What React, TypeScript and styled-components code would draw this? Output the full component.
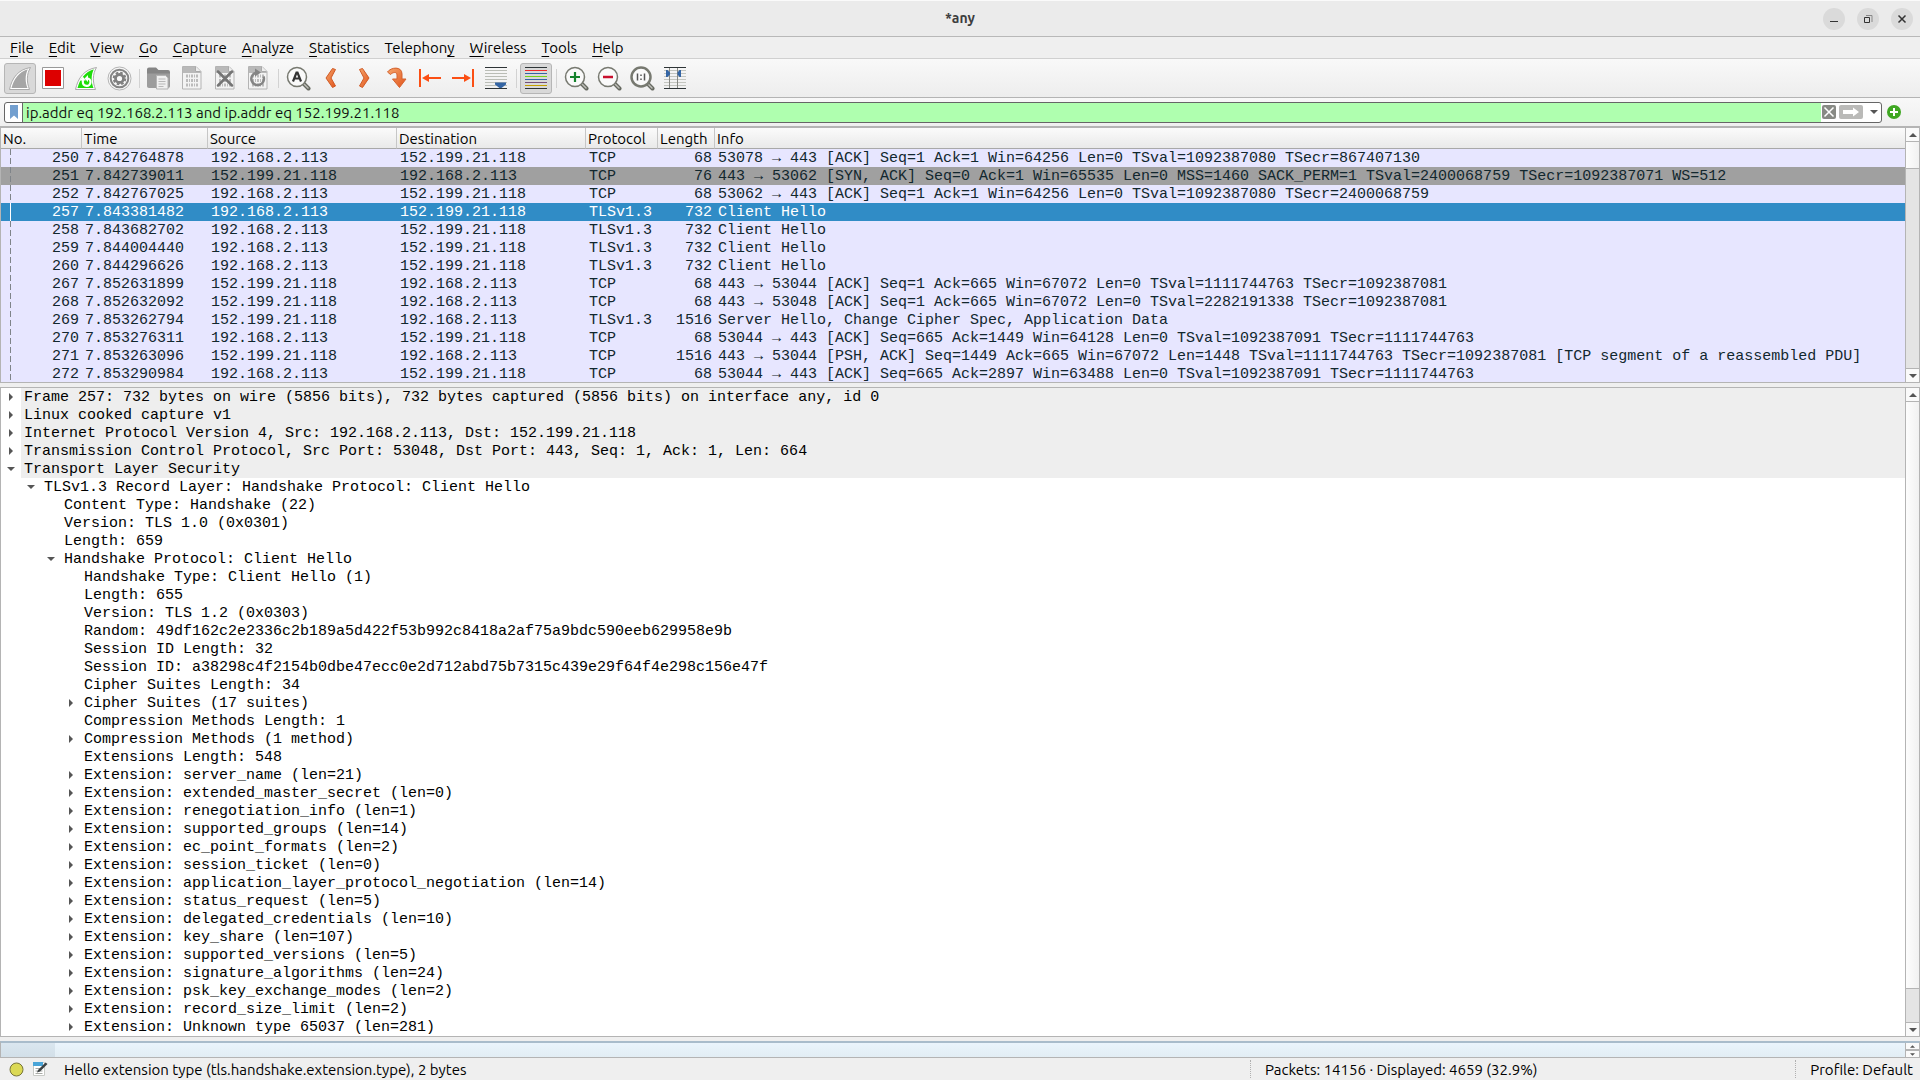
import React from 'react';
import styled, { createGlobalStyle, css } from 'styled-components';

const ui = '"Ubuntu", "Open Sans", sans-serif';
const mono = '"Liberation Mono", monospace';

const GlobalStyle = createGlobalStyle`
  * { box-sizing: border-box; }
  html, body { margin: 0; height: 100%; overflow: hidden; }
  #root { height: 100%; }
  button { font: inherit; color: inherit; border: 0; padding: 0; background: none; }
`;

const Window = styled.div`
  height: 100vh;
  display: flex;
  flex-direction: column;
  background: #efefef;
  color: #000;
  font: 15px/20px ${ui};
  white-space: nowrap;
`;

const TitleBar = styled.header`
  flex: none;
  height: 37px;
  display: grid;
  grid-template-columns: 1fr auto 1fr;
  align-items: center;
  background: #ebebeb;
  border-top: 1px solid #fafafa;
  border-bottom: 1px solid #b8b8b8;
`;
const Title = styled.h1`
  grid-column: 2;
  margin: 0;
  padding-bottom: 2px;
  font-size: 14px;
  font-weight: 700;
  line-height: 20px;
  color: #3d3d3d;
`;
const WindowButtons = styled.div`
  display: flex;
  justify-content: flex-end;
  gap: 12px;
  padding-right: 7px;
`;
const WindowButton = styled.button`
  width: 22px;
  height: 22px;
  border-radius: 50%;
  background: #dadada;
  display: grid;
  place-items: center;
`;

const MenuBar = styled.nav`
  flex: none;
  height: 22px;
  display: flex;
  align-items: center;
  padding-left: 10px;
  gap: 15px;
  border-bottom: 1px solid #d0d0d0;
`;
const MenuItem = styled.button`
  line-height: 20px;
  u { text-decoration-thickness: 1px; text-underline-offset: 3px; }
`;

const ToolBar = styled.div`
  flex: none;
  height: 39px;
  display: flex;
  align-items: center;
  padding-left: 4px;
  gap: 1px;
  background: linear-gradient(#f9f9f9, #ededed);
  border-bottom: 1px solid #b4b4b4;
`;
const ToolButton = styled.button<{ $down?: boolean }>`
  width: 32px;
  height: 31px;
  display: grid;
  place-items: center;
  border: 1px solid transparent;
  border-radius: 3px;
  ${(p) => p.$down && css`
    background: #d9d9d9;
    border-color: #b6b6b6;
  `}
  svg { display: block; }
`;
const ToolSeparator = styled.span`
  width: 1px;
  height: 19px;
  margin: 0 2px 0 3px;
  background: #d2d2d2;
`;

const FilterBar = styled.form`
  flex: none;
  height: 28px;
  display: flex;
  align-items: center;
  gap: 5px;
  padding: 0 19px 0 4px;
  background: linear-gradient(#f8f8f8, #efefef);
`;
const FilterField = styled.div`
  flex: 1;
  height: 21px;
  display: flex;
  align-items: center;
  border: 1px solid #666;
  border-radius: 3px;
  background: #fff;
  overflow: hidden;
`;
const Bookmark = styled.button`
  width: 18px;
  height: 19px;
  display: grid;
  place-items: center;
  border-right: 1px solid #666;
`;
const FilterInput = styled.input`
  flex: 1;
  height: 19px;
  border: 0;
  outline: 0;
  padding: 0 3px;
  background: #afffaf;
  font: 15px/19px ${ui};
  color: #111;
`;
const FieldButton = styled.button<{ $width: number; $fill?: string }>`
  width: ${(p) => p.$width}px;
  height: 14px;
  margin-left: ${(p) => (p.$width > 14 ? 3 : 1)}px;
  border-radius: 2px;
  background: ${(p) => p.$fill ?? 'transparent'};
  display: grid;
  place-items: center;
`;
const AddButton = styled.button`
  width: 14px;
  height: 14px;
  svg { display: block; }
`;

const Pane = styled.section<{ $height?: string }>`
  flex: ${(p) => (p.$height ? `0 0 ${p.$height}` : '1 1 0')};
  min-height: 0;
  display: flex;
  border: 1px solid #b4b4b4;
  background: #fff;
`;
const PacketPane = styled(Pane)`
  border-top-width: 2px;
`;
const Splitter = styled.div`
  flex: none;
  height: 4px;
`;
const Scroller = styled.div`
  flex: 1;
  min-width: 0;
  overflow: hidden;
`;

const Packets = styled.table`
  width: 100%;
  table-layout: fixed;
  border-collapse: separate;
  border-spacing: 0;
  font: 15px/17px ${mono};
`;
const HeadCell = styled.th`
  height: 21px;
  padding: 1px 2px 0;
  text-align: left;
  font: 400 15px/19px ${ui};
  background: linear-gradient(#fbfbfb, #e9e9e9);
  border-right: 1px solid #c6c6c6;
  border-bottom: 1px solid #a8a8a8;
  &:last-child { border-right: 0; }
`;
const Row = styled.tr<{ $kind: string }>`
  background: ${(p) => (p.$kind === 'syn' ? '#a0a0a0' : p.$kind === 'selected' ? '#308cc6' : '#e7e6ff')};
  color: ${(p) => (p.$kind === 'selected' ? '#fff' : '#12272e')};
`;
const Cell = styled.td<{ $right?: boolean }>`
  height: 18px;
  padding: 1px 3px 0;
  text-align: ${(p) => (p.$right ? 'right' : 'left')};
  overflow: hidden;
`;
const NumberCell = styled.td<{ $solid: boolean }>`
  height: 18px;
  padding: 0 3px 0 9px;
  > span {
    display: block;
    height: 18px;
    padding-top: 1px;
    text-align: right;
    background: ${(p) => (p.$solid
      ? 'linear-gradient(#fff, #fff) 0 0 / 1px 18px no-repeat'
      : 'repeating-linear-gradient(#7f8489 0 6px, transparent 6px 9px) 0 0 / 1px 18px no-repeat')};
  }
`;

const Track = styled.div`
  flex: none;
  width: 14px;
  display: flex;
  flex-direction: column;
  border-left: 1px solid #b4b4b4;
  background: #e4e4e4;
`;
const ArrowButton = styled.button<{ $end?: boolean; $small?: boolean }>`
  flex: none;
  height: ${(p) => (p.$small ? 7 : 14)}px;
  display: grid;
  place-items: center;
  background: #fafafa;
  border: 0 solid #b4b4b4;
  border-top-width: ${(p) => (p.$end ? 1 : 0)}px;
  border-bottom-width: ${(p) => (p.$end ? 0 : 1)}px;
`;
const Thumb = styled.div<{ $size: string }>`
  flex: 0 1 ${(p) => p.$size};
  background: linear-gradient(90deg, #fdfdfd, #f1f1f1);
  border-bottom: 1px solid #b4b4b4;
`;
const Gap = styled.div`
  flex: 1;
`;

const Tree = styled.ul`
  list-style: none;
  margin: 0;
  padding: 0;
  font: 15px/17px ${mono};
`;
const TreeRow = styled.li<{ $level: number }>`
  height: 18px;
  display: flex;
  padding-left: ${(p) => p.$level * 20}px;
`;
const Twisty = styled.span`
  flex: none;
  width: 20px;
  height: 18px;
  display: grid;
  place-items: center;
`;
const TreeText = styled.span<{ $shade: boolean }>`
  flex: 1;
  padding: 1px 0 0 3px;
  background: ${(p) => (p.$shade ? '#eeeeee' : 'transparent')};
`;

const BytesPane = styled(Pane)`
  border-top: 2px solid #a9bccb;
`;
const Offsets = styled.div`
  width: 54px;
  background: linear-gradient(#dae6ef, #d2dfe8);
`;
const Bytes = styled.div`
  flex: 1;
  background: linear-gradient(#eaf4fc, #e2edf4);
`;

const StatusBar = styled.footer`
  flex: none;
  height: 22px;
  display: grid;
  grid-template-columns: 1250px 1fr auto;
  align-items: center;
`;
const StatusCell = styled.div<{ $divided?: boolean }>`
  display: flex;
  align-items: center;
  height: 18px;
  padding: 2px 7px 0 ${(p) => (p.$divided ? 14 : 9)}px;
  border-left: ${(p) => (p.$divided ? '1px dotted #b0b0b0' : '0')};
`;
const StatusButton = styled.button<{ $space: number }>`
  margin: 0 ${(p) => p.$space}px 2px 0;
  svg { display: block; }
`;

const Arrow = ({ dir, small }: { dir: 'up' | 'down' | 'right'; small?: boolean }) => {
  const d = { up: 'M0 4 4 0 8 4z', down: 'M0 0h8l-4 4z', right: 'M0 0l4 4-4 4z' }[dir];
  const side = dir === 'right';
  const k = small ? 2 : 1;
  return (
    <svg width={(side ? 4 : 8 / k + (small ? 1 : 0))} height={(side ? 8 : 4 / k + (small ? 1 : 0))} viewBox={side ? '0 0 4 8' : '0 0 8 4'}>
      <path d={d} fill="#555" />
    </svg>
  );
};

const Fin = ({ fill, loop }: { fill: string; loop?: boolean }) => (
  <svg width="24" height="25" viewBox="0 0 24 25">
    <path d="M1.500 23.500C4 12 10 3.500 22.500 1.500 18.500 8 18.500 16 21.500 23.500z" fill="#fff" stroke="#aaa" />
    <path d="M3.500 22C6 13 11 6 19.800 3.300 17 9 17 16 19.500 22z" fill={fill} />
    {loop && (
      <>
        <path d="M8.800 13.500v2c0 5.800 7.700 5.800 7.700.5 0-2.200-1.200-3.500-3.500-3.500" fill="none" stroke="#fff" strokeWidth="2.200" />
        <path d="M5.800 14.500 8.800 10.500l3 4zM14 9l-3.500 3.500L14 16z" fill="#fff" />
      </>
    )}
  </svg>
);
const Gear = () => (
  <svg width="25" height="25" viewBox="0 0 25 25" fill="none">
    <circle cx="12.500" cy="12.500" r="11.500" fill="#f8f8f8" stroke="#b4b4b4" />
    <circle cx="12.500" cy="12.500" r="8.800" stroke="#858585" strokeWidth="2" />
    <circle cx="12.500" cy="12.500" r="5.800" stroke="#808080" strokeWidth="2" strokeDasharray="2.600 1.955" />
    <circle cx="12.500" cy="12.500" r="4" stroke="#808080" strokeWidth="2.800" />
  </svg>
);
const Folder = () => (
  <svg width="26" height="24" viewBox="0 0 26 24">
    <path d="M1 3.500Q1 1.500 3 1.500h7l2.500 2.500H22q2 0 2 2V19q0 2-2 2H3q-2 0-2-2z" fill="#858585" />
    <path d="M1 7.500h23V20q0 2-2 2H3q-2 0-2-2z" fill="#9c9c9c" />
    <path d="M10.500 9.500h9l2.500 2.500v11h-11.500z" fill="#f0f0f0" stroke="#b4b4b4" />
    <path d="M12.500 13h7M12.500 15.500h7M12.500 18h7M12.500 20.500h5" stroke="#b8b8b8" />
  </svg>
);
const Page = ({ mark }: { mark?: 'close' | 'reload' }) => (
  <svg width="22" height="26" viewBox="0 0 22 26">
    <path d="M1.500 1.500h13.500l5 5v17.500h-18.500z" fill="#f3f3f3" stroke="#b4b4b4" />
    <path d="M2 2h12.500v4.500H20V8H2z" fill="#b9b9b9" />
    <path d="M14.500 1.500v5h5" fill="#eee" stroke="#aaa" />
    <path d="M5 11h12M5 15.500h12M5 20h12" stroke="#bbb" strokeWidth="3" strokeDasharray="2 1 1 1" />
    {mark === 'close' && <path d="M4 6.500 18 20.500M18 6.500 4 20.500" stroke="#747474" strokeWidth="2.500" strokeLinecap="round" />}
    {mark === 'reload' && (
      <>
        <path d="M16.500 11.500A6.300 6.300 0 1 1 9 7.700" fill="none" stroke="#858585" strokeWidth="2.500" />
        <path d="M8 3.500l6 4-6 4z" fill="#858585" />
      </>
    )}
  </svg>
);
const Lens = ({ sign }: { sign: 'A' | 'plus' | 'minus' | 'one' }) => (
  <svg width="25" height="25" viewBox="0 0 25 25">
    <path d="M17.500 17.500 22.500 22.500" stroke="#666960" strokeWidth="4" strokeLinecap="round" />
    <path d="M18 18 22 22" stroke="#bfc0ba" strokeWidth="1.500" strokeLinecap="round" />
    <circle cx="11" cy="11" r="9.500" fill="#fafafa" stroke="#777970" strokeWidth={sign === 'one' ? 2.5 : 1.5} />
    {sign === 'A' && <path d="M7 15.500 10.500 6.500h1L15 15.500M8.500 12.500h5" fill="none" stroke="#333" strokeWidth="2.200" />}
    {sign === 'plus' && <path d="M6 11h10M11 6v10" stroke="#15832c" strokeWidth="2.200" />}
    {sign === 'minus' && <path d="M6 11h10" stroke="#c8102e" strokeWidth="2.500" />}
    {sign === 'one' && <path d="M7.500 7.500v7M14.500 7.500v7M11 8.500v1.500M11 12.500v1.500" stroke="#555" strokeWidth="1.500" />}
  </svg>
);
const OrangeDefs = () => (
  <defs>
    <linearGradient id="orange" x1="0" y1="0" x2="1" y2="1">
      <stop offset="0" stopColor="#f5a56b" />
      <stop offset="1" stopColor="#e2541b" />
    </linearGradient>
  </defs>
);
const Chevron = ({ flip }: { flip?: boolean }) => (
  <svg width="14" height="24" viewBox="0 0 14 24">
    <OrangeDefs />
    <path
      d={flip ? 'M2.500 3.500 5.500 2.500 12 12 5.500 21.500 2.500 20 7 12z' : 'M11.500 3.500 8.500 2.500 2 12 8.500 21.500 11.500 20 7 12z'}
      fill="url(#orange)" stroke="#cf5a25" strokeLinejoin="round"
    />
  </svg>
);
const JumpTo = () => (
  <svg width="22" height="24" viewBox="0 0 22 24">
    <path d="M1.500 6C5 1 16 0 16 8v5h4l-6.500 8.500L6.500 13H11V9C11 5.500 7 6 4.500 8.500z" fill="url(#orange)" stroke="#d4622e" strokeLinejoin="round" />
  </svg>
);
const EndArrow = ({ flip }: { flip?: boolean }) => (
  <svg width="24" height="20" viewBox="0 0 24 20">
    <g transform={flip ? 'matrix(-1 0 0 1 24 0)' : undefined} fill="#fb4f14">
      <path d="M1 1h2v18H1z" />
      <path d="M4 10l7-4v3h12v2H11v3z" />
    </g>
  </svg>
);
const Lines = ({ colors }: { colors: string[] }) => (
  <svg width="22" height="24" viewBox="0 0 22 24">
    {colors.map((c, i) => <path key={i} d={`M0 ${1.5 + i * 3}h22`} stroke={c} />)}
  </svg>
);
const AutoScroll = () => (
  <svg width="22" height="24" viewBox="0 0 22 24">
    <path d="M0 1.500h22M0 22.500h22" stroke="#2e3436" />
    <path d="M0 4.500h22M0 7.500h22M0 10.500h22M0 13.500h22M0 16.500h22M0 19.500h22" stroke="#babdb6" />
    <path d="M10 16.500h11v2l-4.500 3.500h-2L10 18.500z" fill="#3465a4" />
  </svg>
);
const Columns = () => (
  <svg width="22" height="24" viewBox="0 0 22 24">
    <path d="M0 1.500h22M0 22.500h22" stroke="#2e3436" />
    <path d="M0 4.500h22M0 7.500h22M0 10.500h22M0 13.500h22M0 16.500h22M0 19.500h22" stroke="#c4c6c0" />
    <path d="M5.500 2v20M13.500 2v20" stroke="#888a85" />
    <path d="M2 4h1.500L6 6.500v2L3.500 11H2zM17 4h-1.500L13.500 6.500v2L15.500 11H17z" fill="#3465a4" />
  </svg>
);

const tools: { label: string; icon?: React.ReactNode; down?: boolean }[] = [
  { label: 'Start capturing', icon: <Fin fill="#a5a5a5" />, down: true },
  { label: 'Stop capturing', icon: <svg width="22" height="22" viewBox="0 0 22 22"><path d="M.5.5h21v21H.5z" fill="#fff" stroke="#999" /><path d="M3 3h16v16H3z" fill="#d00" /></svg> },
  { label: 'Restart capture', icon: <Fin fill="#1edc0a" loop /> },
  { label: 'Capture options', icon: <Gear /> },
  { label: '' },
  { label: 'Open', icon: <Folder /> },
  { label: 'Save', icon: <Page /> },
  { label: 'Close', icon: <Page mark="close" /> },
  { label: 'Reload', icon: <Page mark="reload" /> },
  { label: '' },
  { label: 'Find packet', icon: <Lens sign="A" /> },
  { label: 'Previous packet', icon: <Chevron /> },
  { label: 'Next packet', icon: <Chevron flip /> },
  { label: 'Go to packet', icon: <JumpTo /> },
  { label: 'First packet', icon: <EndArrow /> },
  { label: 'Last packet', icon: <EndArrow flip /> },
  { label: 'Auto scroll', icon: <AutoScroll /> },
  { label: '' },
  { label: 'Colorize', icon: <Lines colors={['#2e3436', '#ef2929', '#3465a4', '#73d216', '#3465a4', '#75507b', '#c4a000', '#2e3436']} />, down: true },
  { label: '' },
  { label: 'Zoom in', icon: <Lens sign="plus" /> },
  { label: 'Zoom out', icon: <Lens sign="minus" /> },
  { label: 'Normal size', icon: <Lens sign="one" /> },
  { label: 'Resize columns', icon: <Columns /> },
];

const menus: [string, string, string][] = [
  ['', 'F', 'ile'], ['', 'E', 'dit'], ['', 'V', 'iew'], ['', 'G', 'o'], ['', 'C', 'apture'], ['', 'A', 'nalyze'],
  ['', 'S', 'tatistics'], ['Telephon', 'y', ''], ['', 'W', 'ireless'], ['', 'T', 'ools'], ['', 'H', 'elp'],
];

const A = '192.168.2.113';
const B = '152.199.21.118';
const columns: [string, number | undefined][] = [
  ['No.', 81], ['Time', 126], ['Source', 189], ['Destination', 189], ['Protocol', 72], ['Length', 57], ['Info', undefined],
];
const packets: [number, string, boolean, string, number, string][] = [
  [250, '7.842764878', true, 'TCP', 68, '53078 → 443 [ACK] Seq=1 Ack=1 Win=64256 Len=0 TSval=1092387080 TSecr=867407130'],
  [251, '7.842739011', false, 'TCP', 76, '443 → 53062 [SYN, ACK] Seq=0 Ack=1 Win=65535 Len=0 MSS=1460 SACK_PERM=1 TSval=2400068759 TSecr=1092387071 WS=512'],
  [252, '7.842767025', true, 'TCP', 68, '53062 → 443 [ACK] Seq=1 Ack=1 Win=64256 Len=0 TSval=1092387080 TSecr=2400068759'],
  [257, '7.843381482', true, 'TLSv1.3', 732, 'Client Hello'],
  [258, '7.843682702', true, 'TLSv1.3', 732, 'Client Hello'],
  [259, '7.844004440', true, 'TLSv1.3', 732, 'Client Hello'],
  [260, '7.844296626', true, 'TLSv1.3', 732, 'Client Hello'],
  [267, '7.852631899', false, 'TCP', 68, '443 → 53044 [ACK] Seq=1 Ack=665 Win=67072 Len=0 TSval=1111744763 TSecr=1092387081'],
  [268, '7.852632092', false, 'TCP', 68, '443 → 53048 [ACK] Seq=1 Ack=665 Win=67072 Len=0 TSval=2282191338 TSecr=1092387081'],
  [269, '7.853262794', false, 'TLSv1.3', 1516, 'Server Hello, Change Cipher Spec, Application Data'],
  [270, '7.853276311', true, 'TCP', 68, '53044 → 443 [ACK] Seq=665 Ack=1449 Win=64128 Len=0 TSval=1092387091 TSecr=1111744763'],
  [271, '7.853263096', false, 'TCP', 1516, '443 → 53044 [PSH, ACK] Seq=1449 Ack=665 Win=67072 Len=1448 TSval=1111744763 TSecr=1092387081 [TCP segment of a reassembled PDU]'],
  [272, '7.853290984', true, 'TCP', 68, '53044 → 443 [ACK] Seq=665 Ack=2897 Win=63488 Len=0 TSval=1092387091 TSecr=1111744763'],
];

type Mark = '+' | '-' | '';
const tree: [number, Mark, string][] = [
  [0, '+', 'Frame 257: 732 bytes on wire (5856 bits), 732 bytes captured (5856 bits) on interface any, id 0'],
  [0, '+', 'Linux cooked capture v1'],
  [0, '+', 'Internet Protocol Version 4, Src: 192.168.2.113, Dst: 152.199.21.118'],
  [0, '+', 'Transmission Control Protocol, Src Port: 53048, Dst Port: 443, Seq: 1, Ack: 1, Len: 664'],
  [0, '-', 'Transport Layer Security'],
  [1, '-', 'TLSv1.3 Record Layer: Handshake Protocol: Client Hello'],
  [2, '', 'Content Type: Handshake (22)'],
  [2, '', 'Version: TLS 1.0 (0x0301)'],
  [2, '', 'Length: 659'],
  [2, '-', 'Handshake Protocol: Client Hello'],
  [3, '', 'Handshake Type: Client Hello (1)'],
  [3, '', 'Length: 655'],
  [3, '', 'Version: TLS 1.2 (0x0303)'],
  [3, '', 'Random: 49df162c2e2336c2b189a5d422f53b992c8418a2af75a9bdc590eeb629958e9b'],
  [3, '', 'Session ID Length: 32'],
  [3, '', 'Session ID: a38298c4f2154b0dbe47ecc0e2d712abd75b7315c439e29f64f4e298c156e47f'],
  [3, '', 'Cipher Suites Length: 34'],
  [3, '+', 'Cipher Suites (17 suites)'],
  [3, '', 'Compression Methods Length: 1'],
  [3, '+', 'Compression Methods (1 method)'],
  [3, '', 'Extensions Length: 548'],
  ...['server_name (len=21)', 'extended_master_secret (len=0)', 'renegotiation_info (len=1)', 'supported_groups (len=14)',
    'ec_point_formats (len=2)', 'session_ticket (len=0)', 'application_layer_protocol_negotiation (len=14)', 'status_request (len=5)',
    'delegated_credentials (len=10)', 'key_share (len=107)', 'supported_versions (len=5)', 'signature_algorithms (len=24)',
    'psk_key_exchange_modes (len=2)', 'record_size_limit (len=2)', 'Unknown type 65037 (len=281)',
  ].map((t): [number, Mark, string] => [3, '+', `Extension: ${t}`]),
];

const ScrollBar = ({ thumb }: { thumb: string }) => (
  <Track>
    <ArrowButton aria-label="Scroll up"><Arrow dir="up" /></ArrowButton>
    <Thumb $size={thumb} />
    <Gap />
    <ArrowButton $end aria-label="Scroll down"><Arrow dir="down" /></ArrowButton>
  </Track>
);

export default function App() {
  return (
    <Window>
      <GlobalStyle />
      <TitleBar>
        <Title>*any</Title>
        <WindowButtons>
          <WindowButton aria-label="Minimize"><svg width="10" height="10" viewBox="0 0 10 10"><path d="M1 7.500h8" stroke="#333" /></svg></WindowButton>
          <WindowButton aria-label="Restore"><svg width="10" height="10" viewBox="0 0 10 10" fill="none"><path d="M3 1.500h6V8" stroke="#888" /><path d="M1.500 3.500h5v5h-5z" stroke="#333" /></svg></WindowButton>
          <WindowButton aria-label="Close window"><svg width="10" height="10" viewBox="0 0 10 10"><path d="M1.500 1.500l7 7M8.500 1.500l-7 7" stroke="#333" strokeWidth="1.500" /></svg></WindowButton>
        </WindowButtons>
      </TitleBar>

      <MenuBar>
        {menus.map(([a, k, b]) => <MenuItem key={a + k + b}>{a}<u>{k}</u>{b}</MenuItem>)}
      </MenuBar>

      <ToolBar>
        {tools.map((t, i) => t.icon
          ? <ToolButton key={i} $down={t.down} aria-label={t.label}>{t.icon}</ToolButton>
          : <ToolSeparator key={i} />)}
      </ToolBar>

      <FilterBar onSubmit={(e) => e.preventDefault()}>
        <FilterField>
          <Bookmark type="button" aria-label="Saved filters"><svg width="8" height="14" viewBox="0 0 8 14"><path d="M0 0h8v14L4 10.500 0 14z" fill="#729fcf" /></svg></Bookmark>
          <FilterInput aria-label="Display filter" defaultValue="ip.addr eq 192.168.2.113 and ip.addr eq 152.199.21.118" />
          <FieldButton type="button" $width={14} $fill="#888a85" aria-label="Clear filter"><svg width="12" height="12" viewBox="0 0 12 12"><path d="M1.500 1.500l9 9M10.500 1.500l-9 9" stroke="#fff" strokeWidth="1.500" /></svg></FieldButton>
          <FieldButton type="submit" $width={24} $fill="#babab8" aria-label="Apply filter"><svg width="18" height="10" viewBox="0 0 18 10"><path d="M1 3h10V0.500L17 5l-6 4.500V7H1z" fill="#fff" /></svg></FieldButton>
          <FieldButton type="button" $width={15} aria-label="Recent filters"><Arrow dir="down" /></FieldButton>
        </FilterField>
        <AddButton type="button" aria-label="Add filter button"><svg width="14" height="14" viewBox="0 0 14 14"><circle cx="7" cy="7" r="7" fill="#3fa722" /><path d="M3 7h8M7 3v8" stroke="#fff" strokeWidth="2" /></svg></AddButton>
      </FilterBar>

      <PacketPane $height="257px">
        <Scroller>
          <Packets>
            <colgroup>{columns.map(([n, w]) => <col key={n} width={w} />)}</colgroup>
            <thead><tr>{columns.map(([n]) => <HeadCell key={n}>{n}</HeadCell>)}</tr></thead>
            <tbody>
              {packets.map(([no, time, out, proto, len, info]) => (
                <Row key={no} $kind={no === 251 ? 'syn' : no === 257 ? 'selected' : ''}>
                  <NumberCell $solid={no === 257}><span>{no}</span></NumberCell>
                  <Cell>{time}</Cell>
                  <Cell>{out ? A : B}</Cell>
                  <Cell>{out ? B : A}</Cell>
                  <Cell>{proto}</Cell>
                  <Cell $right>{len}</Cell>
                  <Cell>{info}</Cell>
                </Row>
              ))}
            </tbody>
          </Packets>
        </Scroller>
        <ScrollBar thumb="27px" />
      </PacketPane>
      <Splitter />
      <Pane>
        <Scroller>
          <Tree>
            {tree.map(([level, mark, text]) => (
              <TreeRow key={text + level} $level={level}>
                <Twisty>{mark && <Arrow dir={mark === '+' ? 'right' : 'down'} />}</Twisty>
                <TreeText $shade={level === 0}>{text}</TreeText>
              </TreeRow>
            ))}
          </Tree>
        </Scroller>
        <ScrollBar thumb="587px" />
      </Pane>
      <Splitter />
      <BytesPane $height="17px">
        <Offsets />
        <Bytes />
        <Track>
          <ArrowButton $small aria-label="Scroll bytes up"><Arrow dir="up" small /></ArrowButton>
          <Gap />
          <ArrowButton $small $end aria-label="Scroll bytes down"><Arrow dir="down" small /></ArrowButton>
        </Track>
      </BytesPane>

      <StatusBar>
        <StatusCell>
          <StatusButton $space={9} aria-label="Expert information"><svg width="15" height="15" viewBox="0 0 15 15"><circle cx="7.500" cy="7.500" r="6.500" fill="#dbd954" stroke="#777537" /></svg></StatusButton>
          <StatusButton $space={16} aria-label="Capture comment">
            <svg width="15" height="15" viewBox="0 0 15 15"><path d="M.5.5h11v13H.5z" fill="#fff" stroke="#c8cac6" /><path d="M0 0h10v4H0z" fill="#4aa5d8" /><path d="M2.500 6.500h7M2.500 9h7M2.500 11.500h7" stroke="#a8aaa6" /><path d="M4 10.500 5 8 12.500.5l2 1.500L7 9.500z" fill="#3c4143" /></svg>
          </StatusButton>
          Hello extension type (tls.handshake.extension.type), 2 bytes
        </StatusCell>
        <StatusCell $divided>Packets: 14156 · Displayed: 4659 (32.9%)</StatusCell>
        <StatusCell $divided>Profile: Default</StatusCell>
      </StatusBar>
    </Window>
  );
}
